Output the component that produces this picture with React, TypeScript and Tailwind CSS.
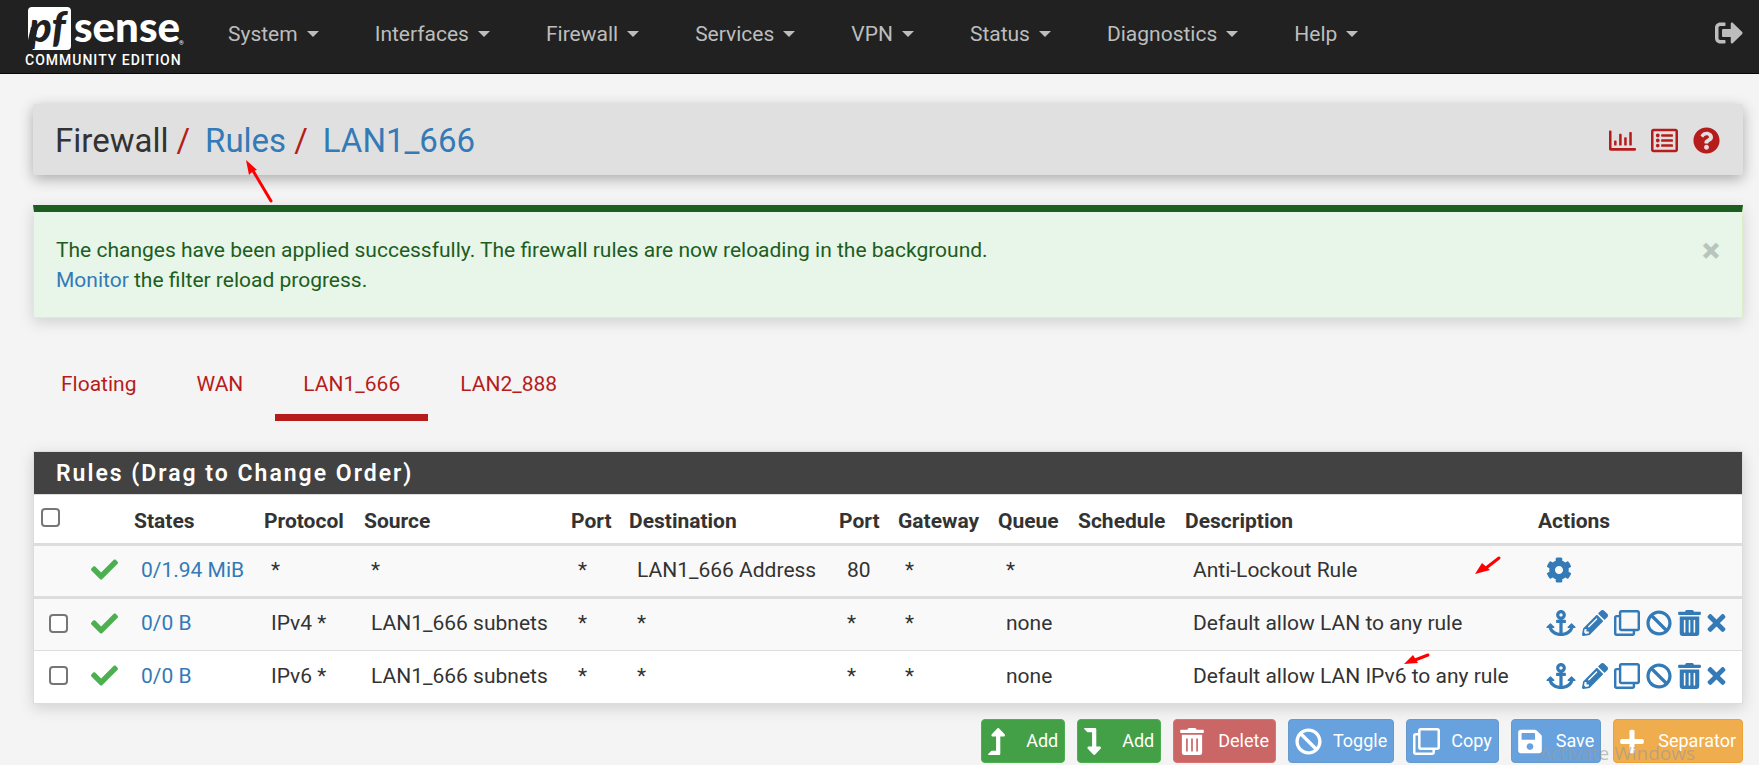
import React from "react";
import {
  FaAnchor,
  FaBan,
  FaCheck,
  FaCog,
  FaLevelDownAlt,
  FaLevelUpAlt,
  FaPencilAlt,
  FaPlus,
  FaQuestionCircle,
  FaRegChartBar,
  FaRegClone,
  FaRegListAlt,
  FaSave,
  FaSignOutAlt,
  FaTimes,
  FaTrashAlt,
} from "react-icons/fa";
import type { IconType } from "react-icons";

const menus = ["System", "Interfaces", "Firewall", "Services", "VPN", "Status", "Diagnostics", "Help"];

const tabs = ["Floating", "WAN", "LAN1_666", "LAN2_888"];

type Rule = {
  fixed?: boolean;
  states: string;
  protocol: string;
  source: string;
  sourcePort: string;
  destination: string;
  destinationPort: string;
  gateway: string;
  queue: string;
  description: string;
};

const rules: Rule[] = [
  {
    fixed: true,
    states: "0/1.94 MiB",
    protocol: "*",
    source: "*",
    sourcePort: "*",
    destination: "LAN1_666 Address",
    destinationPort: "80",
    gateway: "*",
    queue: "*",
    description: "Anti-Lockout Rule",
  },
  {
    states: "0/0 B",
    protocol: "IPv4 *",
    source: "LAN1_666 subnets",
    sourcePort: "*",
    destination: "*",
    destinationPort: "*",
    gateway: "*",
    queue: "none",
    description: "Default allow LAN to any rule",
  },
  {
    states: "0/0 B",
    protocol: "IPv6 *",
    source: "LAN1_666 subnets",
    sourcePort: "*",
    destination: "*",
    destinationPort: "*",
    gateway: "*",
    queue: "none",
    description: "Default allow LAN IPv6 to any rule",
  },
];

const columns = [
  "States",
  "Protocol",
  "Source",
  "Port",
  "Destination",
  "Port",
  "Gateway",
  "Queue",
  "Schedule",
  "Description",
  "Actions",
];

const rowActions: { label: string; Icon: IconType; width: string }[] = [
  { label: "Anchor", Icon: FaAnchor, width: "w-[30px]" },
  { label: "Edit", Icon: FaPencilAlt, width: "w-[26px]" },
  { label: "Copy", Icon: FaRegClone, width: "w-[26px]" },
  { label: "Disable", Icon: FaBan, width: "w-[26px]" },
  { label: "Delete", Icon: FaTrashAlt, width: "w-[23px]" },
  { label: "Kill states", Icon: FaTimes, width: "w-[19px]" },
];

const green = "bg-[#43a047] border-[#4caf50]";
const blue = "bg-[#67a2de] border-[#6699cc]";

const footerButtons: { label: string; Icon: IconType; width: string; tone: string }[] = [
  { label: "Add", Icon: FaLevelUpAlt, width: "w-[17px]", tone: green },
  { label: "Add", Icon: FaLevelDownAlt, width: "w-[17px]", tone: green },
  { label: "Delete", Icon: FaTrashAlt, width: "w-[24px]", tone: "bg-[#cb6666] border-[#d87470]" },
  { label: "Toggle", Icon: FaBan, width: "w-[27px]", tone: blue },
  { label: "Copy", Icon: FaRegClone, width: "w-[27px]", tone: blue },
  { label: "Save", Icon: FaSave, width: "w-[24px]", tone: blue },
  { label: "Separator", Icon: FaPlus, width: "w-[24px]", tone: "bg-[#f0ad4e] border-[#eea236]" },
];

function Checkbox({ label }: { label: string }) {
  return (
    <input
      type="checkbox"
      aria-label={label}
      className="block size-[19px] appearance-none rounded-[4px] border-2 border-[#767676] bg-white"
    />
  );
}

function Logo() {
  return (
    <a href="#home" aria-label="Home" className="block w-[162px] shrink-0 text-white">
      <svg viewBox="0 0 162 46" className="block h-[46px] w-full overflow-visible">
        <path d="M10 0H45a4 4 0 0 1 4 4V39a4 4 0 0 1-4 4H10.500L12.500 35H6V4a4 4 0 0 1 4-4z" fill="#fff" />
        <path d="M6 33L9 20L16 20L12 37L6 37z" fill="#212121" />
        <text x="7" y="35" fontFamily="Lato" fontWeight="900" fontStyle="italic" fontSize="42" fill="#212121">
          pf
        </text>
        <text x="52" y="35" fontFamily="Lato" fontWeight="900" fontSize="42" fill="#fff">
          sense
        </text>
        <text x="157" y="38" fontFamily="Roboto" fontSize="6" fill="#fff">
          ®
        </text>
      </svg>
      <span className="block pl-[3px] text-[14px] leading-[14px] font-medium tracking-[1px]">COMMUNITY EDITION</span>
    </a>
  );
}

function Arrow({ className, d, head }: { className: string; d: string; head: string }) {
  return (
    <svg aria-hidden="true" className={"pointer-events-none absolute " + className}>
      <path d={d} stroke="#f00" strokeWidth="3" strokeLinecap="round" />
      <path d={head} fill="#f00" />
    </svg>
  );
}

export default function App() {
  return (
    <div className="relative min-h-screen overflow-hidden bg-[#f4f4f4] font-[Roboto,sans-serif] text-[21px] leading-[30px] text-[#333]">
      <nav className="flex h-[74px] items-start border-b border-[#080808] bg-[#212121] pr-4 pl-[22px] text-[#bdbdbd]">
        <div className="pt-[7px]">
          <Logo />
        </div>
        <div className="ml-4 flex flex-1 pt-[19px]">
          {menus.map((menu) => (
            <button key={menu} type="button" className="flex items-center gap-[9px] px-7">
              {menu}
              <span className="border-x-[6px] border-t-[6px] border-x-transparent border-t-[#bdbdbd]" />
            </button>
          ))}
        </div>
        <button type="button" aria-label="Log out" className="pt-[19px]">
          <FaSignOutAlt className="size-7" />
        </button>
      </nav>

      <main className="pt-[30px] pr-4 pl-[33px]">
        <header className="relative flex h-[71px] items-center justify-between rounded-[3px] bg-[#e0e0e0] pt-[2px] pr-[23px] pl-[22px] shadow-[0_4px_14px_rgba(0,0,0,0.3)]">
          <h1 className="flex text-[33px] leading-[45px]">
            <span>Firewall</span>
            <span className="mx-2 text-[#b71c1c]">/</span>
            <a href="#rules" className="ml-[7px] text-[#337ab7]">Rules</a>
            <span className="mx-2 text-[#b71c1c]">/</span>
            <a href="#lan1" className="ml-[7px] text-[#337ab7]">LAN1_666</a>
          </h1>
          <div className="flex gap-[15px] text-[#b71c1c]">
            <a href="#status" aria-label="Status"><FaRegChartBar className="size-[27px]" /></a>
            <a href="#log" aria-label="Log"><FaRegListAlt className="size-[27px]" /></a>
            <a href="#help" aria-label="Help"><FaQuestionCircle className="size-[27px]" /></a>
          </div>
          <Arrow
            className="top-[54px] left-[211px] h-12 w-8"
            d="M27 43L8 11"
            head="M2 2L13 12L9 13L5 17z"
          />
        </header>

        <div role="alert" className="mt-[30px] flex items-start justify-between border border-t-[7px] border-[#dcedc8] border-t-[#1b5e20] bg-[#e8f5e9] px-[22px] pt-[23px] pb-[22px] text-[#1b5e20] shadow-[0_4px_14px_rgba(0,0,0,0.15)]">
          <p>
            The changes have been applied successfully. The firewall rules are now reloading in the background.
            <br />
            <a href="#monitor" className="text-[#337ab7]">Monitor</a> the filter reload progress.
          </p>
          <button type="button" aria-label="Close" className="text-[34px] font-black text-[#b9c4ba]">×</button>
        </div>

        <ul className="mt-9 flex gap-1">
          {tabs.map((tab) => (
            <li key={tab}>
              <a
                href={"#" + tab}
                className={
                  "block border-b-[7px] px-7 pt-[15px] pb-[15px] text-[#b71c1c] " +
                  (tab === "LAN1_666" ? "border-[#b71c1c]" : "border-transparent")
                }
              >
                {tab}
              </a>
            </li>
          ))}
        </ul>

        <section className="relative mt-[30px] border border-[#ddd] bg-white shadow-[0_4px_14px_rgba(0,0,0,0.15)]">
          <h2 className="border-b border-[#ddd] bg-[#424242] px-[22px] pt-[7px] pb-[5px] text-[23px] font-semibold tracking-[2px] text-white">
            Rules (Drag to Change Order)
          </h2>
          <table className="w-full table-fixed border-collapse text-left whitespace-nowrap">
            <colgroup>
              <col className="w-[49px]" />
              <col className="w-[43px]" />
              <col className="w-[130px]" />
              <col className="w-[100px]" />
              <col className="w-[207px]" />
              <col className="w-[58px]" />
              <col className="w-[210px]" />
              <col className="w-[59px]" />
              <col className="w-[100px]" />
              <col className="w-[80px]" />
              <col className="w-[107px]" />
              <col />
              <col className="w-[212px]" />
            </colgroup>
            <thead>
              <tr className="h-[49px] border-b-[3px] border-[#ddd]">
                <th className="pb-[2px] pl-[7px]"><Checkbox label="Select all rules" /></th>
                <th aria-label="Status" />
                {columns.map((column, index) => (
                  <th key={index} className="pt-1 pl-2 font-bold">{column}</th>
                ))}
              </tr>
            </thead>
            <tbody className="[&_td]:pb-[2px]">
              {rules.map((rule, index) => (
                <tr
                  key={index}
                  className={
                    "h-[53px] border-[#ddd] " +
                    (rule.fixed ? "border-b-[3px] bg-[#f9f9f9]" : index === 1 ? "border-b bg-[#f9f9f9]" : "bg-white")
                  }
                >
                  <td className="pl-[15px]">{!rule.fixed && <Checkbox label={"Select " + rule.description} />}</td>
                  <td className="pl-2"><FaCheck className="size-[27px] text-[#4caf50]" /></td>
                  <td className="pl-[15px]"><a href="#states" className="text-[#337ab7]">{rule.states}</a></td>
                  <td className="pl-[15px]">{rule.protocol}</td>
                  <td className="pl-[15px]">{rule.source}</td>
                  <td className="pl-[15px]">{rule.sourcePort}</td>
                  <td className="pl-4">{rule.destination}</td>
                  <td className="pl-4">{rule.destinationPort}</td>
                  <td className="pl-[15px]">{rule.gateway}</td>
                  <td className="pl-4">{rule.queue}</td>
                  <td />
                  <td className="pl-4">{rule.description}</td>
                  <td className="pl-4 text-[#337ab7]">
                    {rule.fixed ? (
                      <a href="#settings" aria-label="Settings" className="block w-[26px]">
                        <FaCog className="size-[26px]" />
                      </a>
                    ) : (
                      <div className="flex items-center gap-[6px]">
                        {rowActions.map(({ label, Icon, width }) => (
                          <a key={label} href="#action" aria-label={label}>
                            <Icon className={"h-[26px] " + width} />
                          </a>
                        ))}
                      </div>
                    )}
                  </td>
                </tr>
              ))}
            </tbody>
          </table>
          <Arrow className="top-[103px] right-[240px] h-6 w-7" d="M25 3L12 13" head="M1 19L8 8L16 15z" />
          <Arrow className="top-[200px] right-[311px] h-5 w-7" d="M25 3L12 8" head="M1 12L10 3L15 11z" />
        </section>

        <div className="relative mt-[15px] flex justify-end gap-3 pb-[2px] text-[18px] leading-6 text-white">
          {footerButtons.map(({ label, Icon, width, tone }, index) => (
            <button key={index} type="button" className={"flex h-11 items-center rounded-[4px] border px-[6px] " + tone}>
              <span className="w-[38px]"><Icon className={"h-[27px] " + width} /></span>
              {label}
            </button>
          ))}
          <span className="pointer-events-none absolute right-12 bottom-0 font-['Open_Sans',sans-serif] text-[19px] leading-6 text-[#9a9a9a]/60">
            Activate Windows
          </span>
        </div>
      </main>
    </div>
  );
}
